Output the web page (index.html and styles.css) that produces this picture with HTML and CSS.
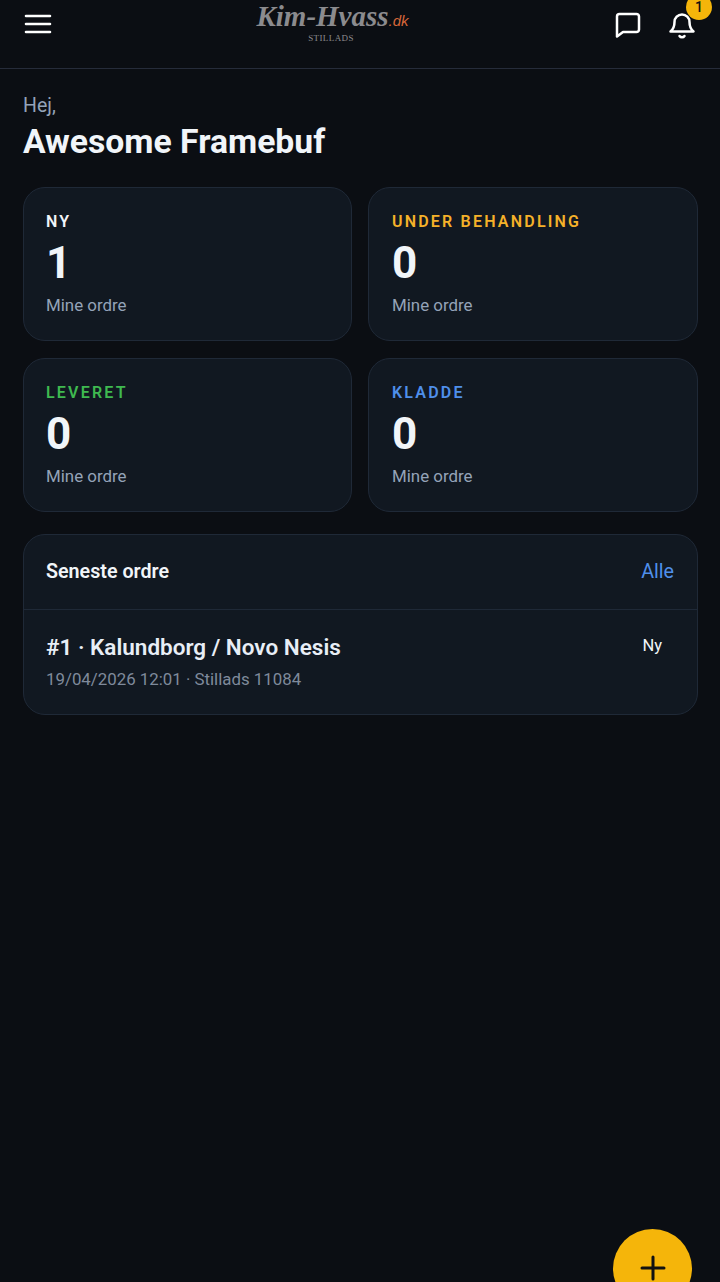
FILE: index.html
```html
<!DOCTYPE html>
<html lang="da">
<head>
    <meta charset="UTF-8">
    <meta name="viewport" content="width=device-width, initial-scale=1.0">
    <title>Kim-Hvass Stillads</title>
    <link rel="stylesheet" href="styles.css">
</head>
<body>
    <!-- Topbar -->
    <header class="topbar">
        <button class="icon-btn menu-btn" aria-label="Menu">
            <svg width="30" height="30" viewBox="0 0 30 30" fill="none" stroke="#fff" stroke-width="2.6" stroke-linecap="round">
                <path d="M3 7h24M3 15h24M3 23h24"/>
            </svg>
        </button>
        <div class="logo">
            <div class="logo-name">Kim-Hvass<span class="logo-tld">.dk</span></div>
            <div class="logo-sub">STILLADS</div>
        </div>
        <div class="topbar-actions">
            <button class="icon-btn" aria-label="Beskeder">
                <svg width="30" height="30" viewBox="0 0 30 30" fill="none" stroke="#fff" stroke-width="2.5" stroke-linejoin="round">
                    <path d="M4 7.500a2.500 2.500 0 0 1 2.500-2.500h17a2.500 2.500 0 0 1 2.500 2.500v13a2.500 2.500 0 0 1-2.500 2.500H10l-6 4.500z"/>
                </svg>
            </button>
            <button class="icon-btn bell-btn" aria-label="Notifikationer">
                <svg width="30" height="30" viewBox="0 0 30 30" fill="none" stroke="#fff" stroke-width="2.5" stroke-linecap="round" stroke-linejoin="round">
                    <path d="M7.500 13a7.500 7.500 0 0 1 15 0c0 5 1 7 4 9.500h-23c3-2.500 4-4.500 4-9.500z"/>
                    <path d="M12.500 27a3 3 0 0 0 5 0"/>
                </svg>
                <span class="badge">1</span>
            </button>
        </div>
    </header>

    <main class="content">
        <div class="greeting">Hej,</div>
        <h1 class="user-name">Awesome Framebuf</h1>

        <!-- Status kort -->
        <section class="stat-grid">
            <div class="stat-card">
                <div class="stat-label">NY</div>
                <div class="stat-value">1</div>
                <div class="stat-sub">Mine ordre</div>
            </div>
            <div class="stat-card">
                <div class="stat-label label-amber">UNDER BEHANDLING</div>
                <div class="stat-value">0</div>
                <div class="stat-sub">Mine ordre</div>
            </div>
            <div class="stat-card">
                <div class="stat-label label-green">LEVERET</div>
                <div class="stat-value">0</div>
                <div class="stat-sub">Mine ordre</div>
            </div>
            <div class="stat-card">
                <div class="stat-label label-blue">KLADDE</div>
                <div class="stat-value">0</div>
                <div class="stat-sub">Mine ordre</div>
            </div>
        </section>

        <!-- Seneste ordre -->
        <section class="recent">
            <div class="recent-head">
                <div class="recent-title">Seneste ordre</div>
                <a class="recent-link" href="#">Alle</a>
            </div>
            <div class="order-row">
                <div>
                    <div class="order-title">#1 · Kalundborg / Novo Nesis</div>
                    <div class="order-meta">19/04/2026 12:01 · Stillads 11084</div>
                </div>
                <div class="order-status">Ny</div>
            </div>
        </section>
    </main>

    <button class="fab" aria-label="Ny ordre">
        <svg width="30" height="30" viewBox="0 0 30 30" fill="none" stroke="#111" stroke-width="3" stroke-linecap="round">
            <path d="M15 4v22M4 15h22"/>
        </svg>
    </button>
</body>
</html>
```

FILE: styles.css
```css
* {
    margin: 0;
    padding: 0;
    box-sizing: border-box;
}

html, body {
    height: 100%;
    overflow: hidden;
}

body {
    font-family: Roboto, sans-serif;
    background: #0b0e13;
    color: #f1f5f9;
    position: relative;
}

button {
    background: none;
    border: 0;
    font-family: inherit;
}

/* Topbar */
.topbar {
    display: flex;
    justify-content: space-between;
    align-items: flex-start;
    height: 69px;
    padding: 9px 23px 0 23px;
    border-bottom: 1px solid #262c3a;
}

.icon-btn {
    display: block;
    width: 30px;
    height: 30px;
    position: relative;
}

.logo {
    margin-top: -9px;
    margin-left: -1px;
    text-align: center;
    color: #8b8b8e;
}

.logo-name {
    font-family: "Liberation Serif", serif;
    font-style: italic;
    font-weight: 700;
    font-size: 29px;
    line-height: 33px;
}

.logo-tld {
    font-family: "Liberation Sans", sans-serif;
    font-weight: 400;
    font-size: 15px;
    color: #d9673a;
}

.logo-sub {
    font-family: "Liberation Serif", serif;
    font-size: 9px;
    line-height: 11px;
    letter-spacing: 0.4px;
    margin-top: -4px;
    margin-right: 3px;
}

.topbar-actions {
    display: flex;
    gap: 24px;
}

.badge {
    position: absolute;
    top: -15px;
    left: 19px;
    width: 26px;
    height: 26px;
    border-radius: 50%;
    background: #f5b50a;
    color: #111;
    font-size: 14px;
    font-weight: 500;
    line-height: 26px;
    text-align: center;
}

/* Indhold */
.content {
    padding: 25px 22px 0 23px;
}

.greeting {
    color: #94a3b8;
    font-size: 19.500px;
    line-height: 24px;
}

.user-name {
    font-size: 33.700px;
    font-weight: 700;
    line-height: 38px;
    margin-top: 5px;
}

.stat-grid {
    display: grid;
    grid-template-columns: 329px 330px;
    column-gap: 16px;
    row-gap: 17px;
    margin-top: 26px;
}

.stat-card {
    height: 154px;
    padding: 24px 22px 0;
    background: #111821;
    border: 1px solid #1f2937;
    border-radius: 22px;
}

.stat-card:nth-child(even) {
    padding-left: 23px;
}

.stat-label {
    font-size: 16px;
    font-weight: 600;
    line-height: 20px;
    letter-spacing: 2.200px;
    color: #f1f5f9;
}

.label-amber {
    color: #f5b129;
}

.label-green {
    color: #3fb950;
}

.label-blue {
    color: #4f8fea;
}

.stat-value {
    font-size: 44px;
    font-weight: 700;
    line-height: 52px;
    margin-top: 5px;
}

.stat-sub {
    color: #94a3b8;
    font-size: 16.900px;
    line-height: 22px;
    margin-top: 5px;
}

/* Seneste ordre */
.recent {
    margin-top: 22px;
    background: #111821;
    border: 1px solid #1f2937;
    border-radius: 22px;
}

.recent-head {
    display: flex;
    justify-content: space-between;
    align-items: center;
    height: 75px;
    padding: 0 23px 0 22px;
    border-bottom: 1px solid #1f2937;
}

.recent-title {
    font-size: 19.700px;
    font-weight: 600;
    margin-top: -2px;
}

.recent-link {
    color: #4f8fea;
    font-size: 19.700px;
    margin-top: -2px;
    text-decoration: none;
}

.order-row {
    display: flex;
    justify-content: space-between;
    align-items: flex-start;
    height: 104px;
    padding: 22px 35px 0 22px;
}

.order-title {
    font-size: 22.500px;
    font-weight: 600;
    line-height: 30px;
    color: #e8eef6;
}

.order-meta {
    color: #7f8a9b;
    font-size: 16.850px;
    line-height: 22px;
    margin-top: 6px;
}

.order-status {
    color: #f1f5f9;
    font-size: 16.500px;
    line-height: 26px;
    margin-top: 1px;
}

/* Ny ordre knap */
.fab {
    position: absolute;
    left: 613px;
    top: 1229px;
    width: 79px;
    height: 79px;
    padding-bottom: 2px;
    border-radius: 50%;
    background: #f5b50a;
    display: flex;
    align-items: center;
    justify-content: center;
}
```
